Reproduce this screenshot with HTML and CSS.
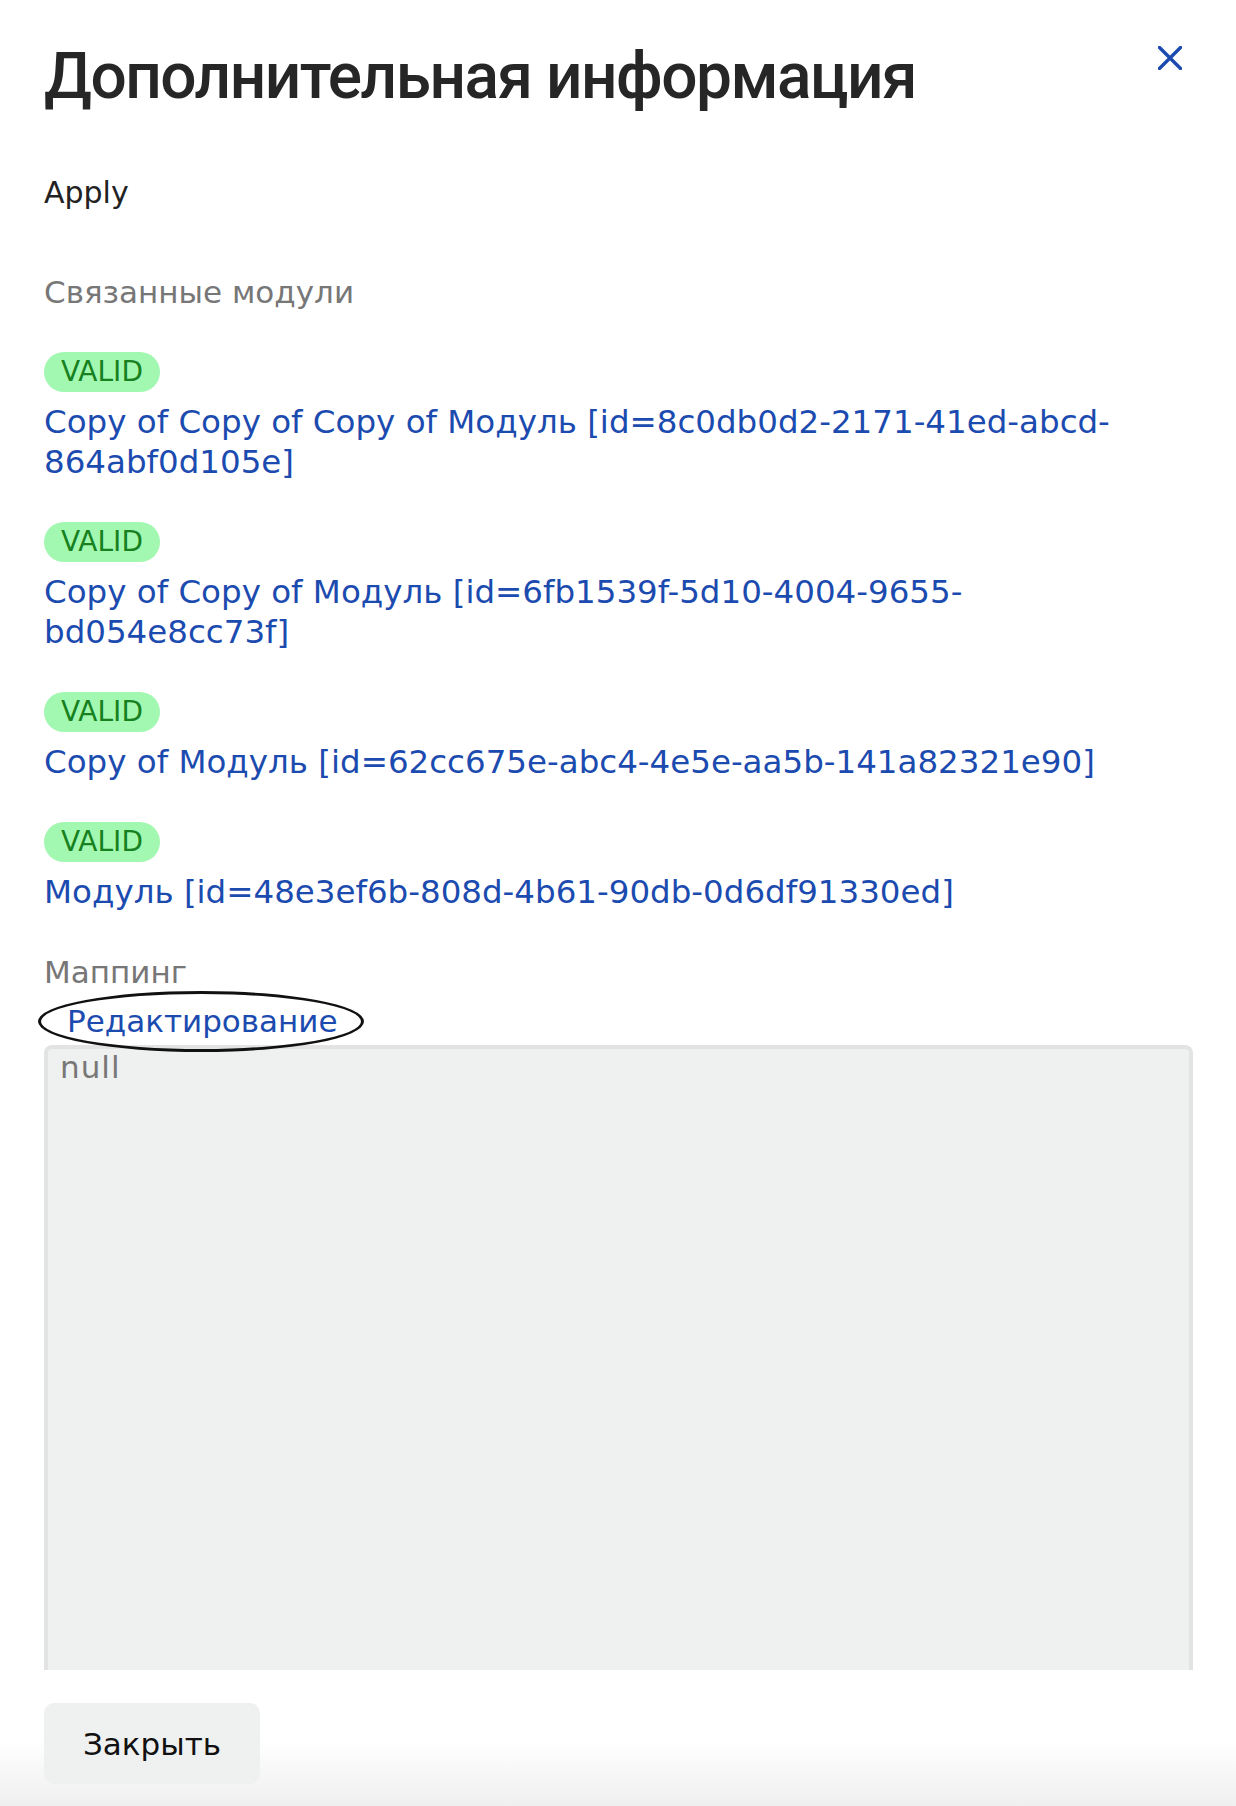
FILE: index.html
```html
<!DOCTYPE html>
<html lang="ru">
<head>
    <meta charset="UTF-8">
    <meta name="viewport" content="width=device-width, initial-scale=1.0">
    <title>Дополнительная информация</title>
    <link rel="stylesheet" href="styles.css">
</head>
<body>
    <div class="modal">
        <div class="modal-header">
            <h1>Дополнительная информация</h1>
            <button class="close" title="Закрыть">
                <svg width="24" height="24" viewBox="0 0 24 24">
                    <path d="M1.5 1.5 L22.5 22.5 M22.5 1.5 L1.5 22.5" stroke="#1c4bb0" stroke-width="3.4" stroke-linecap="square" fill="none"/>
                </svg>
            </button>
        </div>

        <div class="modal-body">
            <p class="name">Apply</p>

            <div class="label">Связанные модули</div>
            <ul class="modules">
                <li>
                    <span class="badge">VALID</span>
                    <a href="#">Copy of Copy of Copy of Модуль [id=8c0db0d2-2171-41ed-abcd-864abf0d105e]</a>
                </li>
                <li>
                    <span class="badge">VALID</span>
                    <a href="#">Copy of Copy of Модуль [id=6fb1539f-5d10-4004-9655-bd054e8cc73f]</a>
                </li>
                <li>
                    <span class="badge">VALID</span>
                    <a href="#">Copy of Модуль [id=62cc675e-abc4-4e5e-aa5b-141a82321e90]</a>
                </li>
                <li>
                    <span class="badge">VALID</span>
                    <a href="#">Модуль [id=48e3ef6b-808d-4b61-90db-0d6df91330ed]</a>
                </li>
            </ul>

            <div class="label label-mapping">Маппинг</div>
            <div class="edit-row">
                <a href="#" class="edit">Редактирование</a>
                <span class="mark"></span>
            </div>
            <div class="code">null</div>
        </div>

        <div class="modal-footer">
            <button class="btn">Закрыть</button>
        </div>
    </div>
</body>
</html>
```

FILE: styles.css
```css
body {
    margin: 0;
    padding: 0;
    background-color: #fff;
    font-family: "DejaVu Sans", Verdana, sans-serif;
    color: #222;
}
.modal {
    width: 1236px;
    height: 1806px;
    display: flex;
    flex-direction: column;
    overflow: hidden;
}
.modal-header {
    display: flex;
    justify-content: space-between;
    align-items: flex-start;
    padding: 33px 54px 0 44px;
}
.modal-header h1 {
    margin: 0;
    font-family: Roboto, "Noto Sans", sans-serif;
    font-weight: 500;
    font-size: 64px;
    line-height: 88px;
    letter-spacing: -1.5px;
    color: #262626;
}
.close {
    background: none;
    border: none;
    padding: 0;
    margin-top: 13px;
    cursor: pointer;
}
.close svg {
    display: block;
}
.modal-body {
    padding: 0 43px 0 44px;
    height: 1549px;
    overflow: hidden;
}
.name {
    margin: 52px 0 0;
    font-size: 30px;
    line-height: 40px;
    color: #222;
}
.label {
    margin-top: 59px;
    font-size: 31px;
    line-height: 40px;
    color: #777;
}
.label-mapping {
    margin-top: 40px;
}
.modules {
    list-style: none;
    margin: 40px 0 0;
    padding: 0;
}
.modules li {
    margin-bottom: 40px;
}
.modules li:last-child {
    margin-bottom: 0;
}
.badge {
    display: inline-block;
    height: 40px;
    padding: 0 17px;
    border-radius: 20px;
    background-color: #a3f8b1;
    color: #17801f;
    font-size: 28px;
    line-height: 40px;
}
.modules a {
    display: block;
    margin-top: 10px;
    font-size: 32.5px;
    line-height: 40px;
    color: #1c4bb0;
    text-decoration: none;
}
.edit-row {
    position: relative;
    margin-top: 7px;
    height: 44px;
}
.edit {
    display: inline-block;
    padding-left: 23px;
    font-size: 31px;
    line-height: 44px;
    color: #1c4bb0;
    text-decoration: none;
}
.mark {
    position: absolute;
    left: -6px;
    top: -8px;
    width: 320px;
    height: 55px;
    border: 3px solid #111;
    border-radius: 50%;
    pointer-events: none;
}
.code {
    margin-top: 2px;
    height: 700px;
    padding: 0 12px;
    border: 4px solid #e2e3e3;
    border-bottom: none;
    border-radius: 8px 8px 0 0;
    background-color: #eff0f0;
    font-size: 31px;
    line-height: 36px;
    letter-spacing: 1px;
    color: #777;
}
.modal-footer {
    flex: 1;
    padding: 33px 44px 0;
    background: linear-gradient(to bottom, #fff 70px, #efefef);
}
.btn {
    width: 216px;
    height: 81px;
    border: none;
    border-radius: 10px;
    background-color: #eff0f0;
    font-family: "DejaVu Sans", Verdana, sans-serif;
    font-size: 31px;
    color: #111;
    cursor: pointer;
}
```
